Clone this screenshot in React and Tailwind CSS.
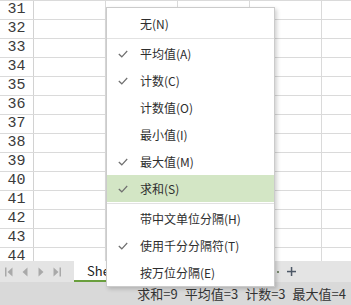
import React from "react";

const rows = [31, 32, 33, 34, 35, 36, 37, 38, 39, 40, 41, 42, 43, 44];

const menu = [
  { label: "无(N)" },
  { sep: true },
  { label: "平均值(A)", checked: true },
  { label: "计数(C)", checked: true },
  { label: "计数值(O)" },
  { label: "最小值(I)" },
  { label: "最大值(M)", checked: true },
  { label: "求和(S)", checked: true, active: true },
  { sep: true },
  { label: "带中文单位分隔(H)" },
  { label: "使用千分分隔符(T)", checked: true },
  { label: "按万位分隔(E)" },
];

function Check() {
  return (
    <svg width="10" height="8" viewBox="0 0 10 8">
      <polyline points="0.8,4 3.8,6.8 9.2,1" fill="none" stroke="#6f6f6f" strokeWidth="1.2" />
    </svg>
  );
}

function NavIcon({ dir, bar }) {
  return (
    <div className="w-[16px] flex justify-center items-center">
      <svg width="8" height="10" viewBox="0 0 8 10">
        {dir === "left" ? (
          <>
            {bar && <rect x="0" y="0.5" width="1.5" height="9" fill="#a9a9a9" />}
            <polygon points={bar ? "7.5,0.5 2.5,5 7.5,9.5" : "6.5,0.5 1.5,5 6.5,9.5"} fill="#a9a9a9" />
          </>
        ) : (
          <>
            <polygon points={bar ? "0.5,0.5 5.5,5 0.5,9.5" : "1.5,0.5 6.5,5 1.5,9.5"} fill="#a9a9a9" />
            {bar && <rect x="6.5" y="0.5" width="1.5" height="9" fill="#a9a9a9" />}
          </>
        )}
      </svg>
    </div>
  );
}

export default function App() {
  return (
    <div className="relative w-[351px] h-[305px] overflow-hidden bg-white font-['Noto_Sans_CJK_SC',sans-serif]">
      <div className="flex flex-col h-full">
        {/* grid */}
        <div className="h-[261px] overflow-hidden border-t border-[#dadada]">
          {rows.map((n) => (
            <div key={n} className="flex h-[19px] border-b border-[#dadada]">
              <div className="w-[34px] shrink-0 border-r border-[#d2d2d2] text-center text-[15px] leading-[18px] text-[#3a3a3a] font-['Liberation_Mono',monospace]">
                {n}
              </div>
              {[0, 1, 2, 3, 4].map((c) => (
                <div key={c} className="w-[72px] shrink-0 border-r border-[#dadada]" />
              ))}
            </div>
          ))}
        </div>

        {/* sheet tabs */}
        <div className="flex h-[21px] bg-[#e4e4e4]">
          <div className="w-[74px] flex items-center pl-[1px]">
            <NavIcon dir="left" bar />
            <NavIcon dir="left" />
            <NavIcon dir="right" />
            <NavIcon dir="right" bar />
          </div>
          <div className="w-[66px] bg-white border-b-2 border-[#6a9f3e] pl-[13px] text-[13px] leading-[19px] text-[#222]">
            Sheet1
          </div>
          <div className="w-[127px]" />
          <div className="flex items-center gap-[3px]">
            <div className="w-[2px] h-[2px] bg-[#7a8a70]" />
            <div className="w-[2px] h-[2px] bg-[#7a8a70]" />
            <div className="w-[2px] h-[2px] bg-[#7a8a70]" />
          </div>
          <div className="flex items-center pl-[8px]">
            <svg width="9" height="9" viewBox="0 0 9 9">
              <rect x="3.8" y="0" width="1.5" height="9" fill="#4d5866" />
              <rect x="0" y="3.8" width="9" height="1.5" fill="#4d5866" />
            </svg>
          </div>
        </div>

        {/* status bar */}
        <div className="flex-1 bg-[#d9d9d9] flex items-center justify-end pr-[5px] gap-[7px] text-[13px] text-[#333]">
          <span>求和=9</span>
          <span>平均值=3</span>
          <span>计数=3</span>
          <span>最大值=4</span>
        </div>
      </div>

      {/* context menu */}
      <div className="absolute left-[106px] top-[7px] w-[169px] bg-white border border-[#cbcbcb] pt-[2px] shadow-[2px_2px_4px_rgba(0,0,0,0.18)]">
        {menu.map((m, i) =>
          m.sep ? (
            <div key={i} className="h-[3px] flex items-center">
              <div className="h-px w-full bg-[#e2e2e2]" />
            </div>
          ) : (
            <div key={i} className={`flex items-center h-[27px] ${m.active ? "bg-[#d3e6c5]" : ""}`}>
              <div className="w-[33px] shrink-0 pl-[11px] flex items-center">{m.checked && <Check />}</div>
              <span className="text-[12px] text-[#2e2e2e]">{m.label}</span>
            </div>
          )
        )}
      </div>
    </div>
  );
}
